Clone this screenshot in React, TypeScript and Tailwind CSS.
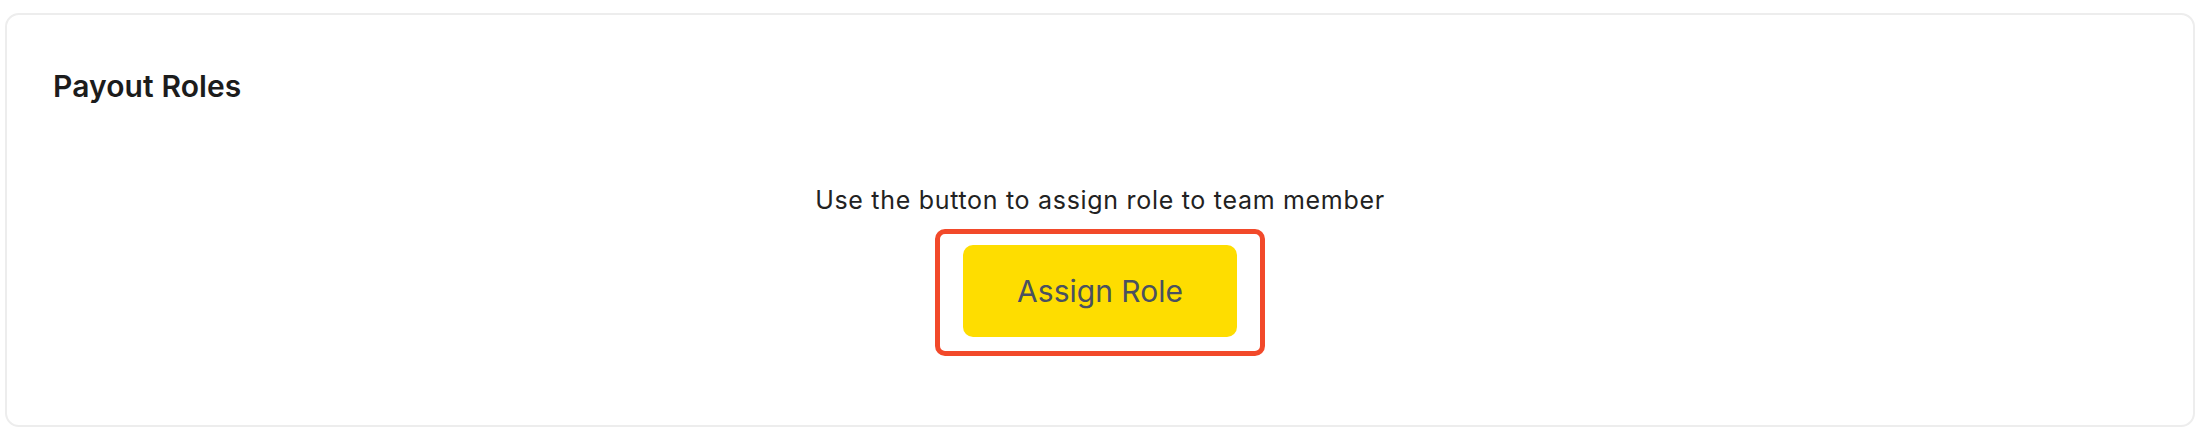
export default function App() {
  return (
    <div className="min-h-[434px] w-full bg-white pt-[13px] pb-[7px] pl-[5px] pr-[11px] font-['Inter',sans-serif]">
      {/* PAYOUT ROLES CARD */}
      <section className="flex h-[414px] flex-col rounded-[14px] border-2 border-[#ededed] bg-white px-[46px] pt-[53px]">
        <h2 className="text-[30px] leading-[36px] font-semibold tracking-[0.1px] text-[#1c1c1c]">Payout Roles</h2>

        {/* EMPTY STATE */}
        <div className="mt-[80px] flex flex-col items-center">
          <p className="text-[25px] leading-[32px] tracking-[0.7px] text-[#222]">Use the button to assign role to team member</p>
          <div className="mt-[13px] rounded-[10px] border-[5px] border-[#f2492a] px-[23px] pt-[11px] pb-[14px]">
            <button className="h-[92px] w-[274px] rounded-[10px] bg-[#fedd00] text-[30px] text-[#4a5160]">
              Assign Role
            </button>
          </div>
        </div>
      </section>
    </div>
  )
}
